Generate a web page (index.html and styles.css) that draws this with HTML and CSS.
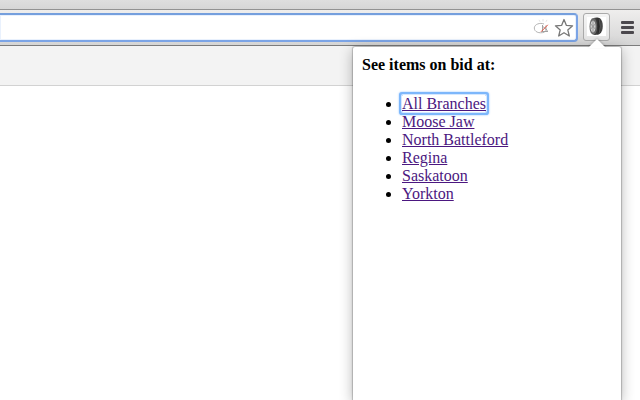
FILE: index.html
```html
<!DOCTYPE html>
<html lang="en">
<head>
<meta charset="utf-8">
<title>Items on bid</title>
<link rel="stylesheet" href="styles.css">
</head>
<body>
<div class="tabstrip"></div>
<header class="toolbar">
  <div class="omnibox">
    <svg class="blocked" width="20" height="18" viewBox="0 0 20 18" fill="none">
      <path d="M12 5C8 3.4 2.5 5.2 2.3 8.9C2.3 13 7 14.8 12.5 13.2" stroke="#aaa" stroke-width=".9"/>
      <path d="M10.5 6V12.5M10.5 7.2L15.5 11.5M14 6.5V12.5M10 12.5H16" stroke="#999" stroke-width=".9"/>
      <path d="M7 .8L8 2.8M11 0V2.5M15 .8L14 2.8" stroke="#ddd" stroke-width=".8"/>
      <path d="M9 12.8L15.8 5.8" stroke="#e2523f"/>
    </svg>
    <svg class="star" width="20" height="20" viewBox="0 0 20 20">
      <path d="M10 1.5L12.3 7.3L18.6 7.8L13.8 11.9L15.3 18L10 14.7L4.7 18L6.2 11.9L1.4 7.8L7.7 7.3Z" fill="#fff" stroke="#777" stroke-width="1.3" stroke-linejoin="round"/>
    </svg>
  </div>
  <div class="action">
    <svg width="19" height="19" viewBox="0 0 19 19">
      <defs><linearGradient id="tread"><stop stop-color="#555"/><stop offset=".55" stop-color="#292929"/><stop offset="1" stop-color="#555"/></linearGradient></defs>
      <path fill="#fff" d="M0 0H19V19H0Z"/>
      <path d="M6.5 1C8 .3 11.5 .3 13 1.2C16.8 4.5 16.8 13.5 13 16.8C11.5 18 8 18.2 6.5 17.8Z" fill="url(#tread)"/>
      <ellipse cx="6.3" cy="9.4" rx="3.8" ry="8.4" fill="#686868"/>
      <ellipse cx="6" cy="9.4" rx="2.6" ry="6" fill="#d0d0d0"/>
      <path d="M6 3.8V15M3.8 7L8.2 12M3.8 12L8.2 7" stroke="#8c8c8c" stroke-width=".8"/>
      <path d="M12 1.5Q15 9.5 12 17" fill="none" stroke="#666" stroke-width=".6"/>
    </svg>
  </div>
  <div class="menu"><i></i><i></i><i></i></div>
</header>
<div class="infobar"></div>
<main class="popup">
  <svg class="arrow" width="18" height="9" viewBox="0 0 18 9"><path d="M0 9L9 0L18 9Z" fill="#fff"/></svg>
  <b>See items on bid at:</b>
  <ul>
    <li><a class="focused" href="#">All Branches</a></li>
    <li><a href="#">Moose Jaw</a></li>
    <li><a href="#">North Battleford</a></li>
    <li><a href="#">Regina</a></li>
    <li><a href="#">Saskatoon</a></li>
    <li><a href="#">Yorkton</a></li>
  </ul>
</main>
</body>
</html>
```
FILE: styles.css
```css
* { box-sizing: border-box; }
body {
  margin: 0;
  height: 400px;
  overflow: hidden;
  position: relative;
  background: #fff;
  font: 16px/18px "Liberation Serif", "Times New Roman", serif;
}
.tabstrip {
  height: 10px;
  background: linear-gradient(#dedede, #d6d6d6);
  border-bottom: 1px solid #929292;
}
.toolbar {
  display: flex;
  align-items: flex-start;
  height: 36px;
  padding: 3px 6px 0 0;
  background: linear-gradient(#efeeed, #d5d5d5);
  border-bottom: 1px solid #7c7c7c;
}
.omnibox {
  display: flex;
  justify-content: flex-end;
  flex: 1;
  height: 29px;
  margin-right: 5px;
  padding: 4px 2px 0 0;
  background: #fff;
  border: 2px solid #7ba4e6;
  border-left: 0;
  border-top-color: #759fdd;
  border-radius: 0 4px 4px 0;
  box-shadow: inset 0 0 0 1px #e9f1fd;
}
.blocked { margin: 0 2px 0 0; }
.star { margin-top: -1px; }
.action {
  width: 27px;
  height: 28px;
  margin-right: 11px;
  padding: 3px 0 0 3px;
  background: linear-gradient(#f5f5f5, #e4e4e4);
  border: 1px solid #aaa;
  border-radius: 3px;
  line-height: 0;
}
.menu {
  display: grid;
  gap: 2px;
  width: 13px;
  margin-top: 8px;
}
.menu i {
  height: 3px;
  background: #4b484d;
  border-radius: 1px;
}
.infobar {
  height: 40px;
  background: #f3f3f3;
  border-bottom: 1px solid #d2d2d2;
}
.popup {
  position: absolute;
  left: 353px;
  top: 47px;
  width: 268px;
  height: 353px;
  padding: 9px;
  background: #fff;
  border-radius: 2px 2px 0 0;
  box-shadow: 0 0 1px 1px rgba(0, 0, 0, .2), 0 3px 14px rgba(0, 0, 0, .3);
}
.arrow {
  position: absolute;
  top: -8px;
  right: 15px;
  filter: drop-shadow(0 -1px 1px rgba(0, 0, 0, .2));
}
ul {
  margin: 21px 0 0;
  padding-left: 40px;
}
a { color: #4b1780; }
.focused {
  border-radius: 1px;
  box-shadow: 0 0 0 1px #d5e8ff, 0 0 0 3px #7db7fb, 0 0 2px 3px #8abfff;
}
```
